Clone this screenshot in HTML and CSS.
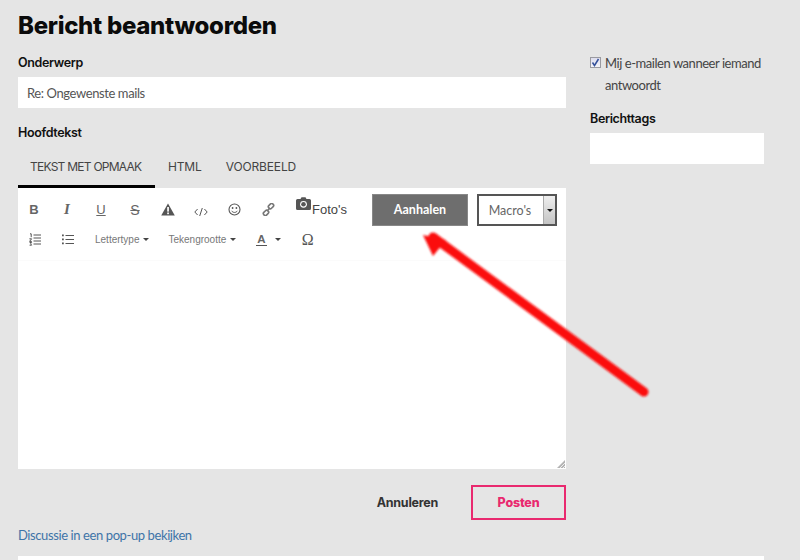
FILE: index.html
```html
<!DOCTYPE html>
<html lang="nl">
<head>
<meta charset="utf-8">
<title>Bericht beantwoorden</title>
<link rel="stylesheet" href="styles.css">
</head>
<body>
<div class="page">
  <main class="main">
    <h1 class="title">Bericht beantwoorden</h1>
    <label class="label first">Onderwerp</label>
    <div class="input subject">Re: Ongewenste mails</div>
    <label class="label second">Hoofdtekst</label>
    <div class="tabs">
      <span class="tab active">TEKST MET OPMAAK</span>
      <span class="tab">HTML</span>
      <span class="tab">VOORBEELD</span>
    </div>
    <section class="editor">
      <div class="toolbar">
        <div class="tool-rows">
          <div class="row row1">
            <span class="ic ic-b">B</span>
            <span class="ic ic-i">I</span>
            <span class="ic ic-u">U</span>
            <span class="ic ic-s">S</span>
            <svg class="svg warn" width="14" height="13" viewBox="0 0 14 13"><path fill="#555" d="M7 0.5 13.8 12.5H.2Z"/><rect x="6.2" y="4" width="1.7" height="4.6" fill="#fff"/><rect x="6.2" y="9.5" width="1.7" height="1.7" fill="#fff"/></svg>
            <svg class="svg code" width="14" height="10" viewBox="0 0 14 10"><path fill="none" stroke="#555" stroke-width="1" d="M3.6 2 .8 5l2.8 3M10.4 2 13.2 5l-2.8 3M8.3 1 5.7 9"/></svg>
            <svg class="svg smile" width="13" height="13" viewBox="0 0 13 13"><circle cx="6.5" cy="6.5" r="5.5" fill="none" stroke="#555" stroke-width="1.1"/><circle cx="4.6" cy="5" r=".9" fill="#555"/><circle cx="8.4" cy="5" r=".9" fill="#555"/><path d="M3.6 7.8c1.4 2.2 4.4 2.2 5.8 0" fill="none" stroke="#555" stroke-width="1"/></svg>
            <svg class="svg link" width="13" height="13" viewBox="0 0 13 13"><g fill="none" stroke="#777" stroke-width="1.6"><rect x="6.2" y="1.2" width="5.6" height="3.8" rx="1.6" transform="rotate(-45 9 3.1)"/><rect x="1.2" y="8" width="5.6" height="3.8" rx="1.6" transform="rotate(-45 4 9.9)"/><path d="M5 8 8 5"/></g></svg>
            <span class="photos">
              <svg class="camera" width="15" height="13" viewBox="0 0 15 13"><path fill="#555" d="M1.5 2H4.5L5.5.3H9.5L10.5 2H13.5Q15 2 15 3.5V11.5Q15 13 13.5 13H1.5Q0 13 0 11.5V3.5Q0 2 1.5 2Z"/><circle cx="7.5" cy="7.3" r="3.4" fill="#fff"/><circle cx="7.5" cy="7.3" r="2.3" fill="#555"/></svg>
              <span class="photos-text">Foto's</span>
            </span>
          </div>
          <div class="row row2">
            <svg class="svg ol" width="12" height="13" viewBox="0 0 12 13"><path fill="none" stroke="#555" stroke-width="1" d="M4.5 2h7.5M4.5 5h7.5M4.5 8h7.5M4.5 11h7.5M1 .8h1.2v3.4M.4 5.8h2.2L.6 8.4h2.2M.6 9.5h2l-1 1.3 1 1.4h-2"/></svg>
            <svg class="svg ul" width="12" height="11" viewBox="0 0 12 11"><path fill="none" stroke="#555" stroke-width="1" d="M3.5 1.5H12M3.5 5.5H12M3.5 9.5H12"/><path fill="#555" d="M0 .5h1.8v1.8H0zM0 4.5h1.8v1.8H0zM0 8.5h1.8v1.8H0z"/></svg>
            <span class="drop d-font">Lettertype<i class="caret"></i></span>
            <span class="drop d-size">Tekengrootte<i class="caret"></i></span>
            <span class="drop d-color"><span class="a-color">A</span><i class="caret"></i></span>
            <span class="omega">Ω</span>
          </div>
        </div>
        <button class="quote" type="button">Aanhalen</button>
        <div class="select">
          <span class="select-text">Macro's</span>
          <span class="select-arrow"><i class="caret dark"></i></span>
        </div>
      </div>
      <div class="body-area">
        <svg class="grip" width="8" height="8" viewBox="0 0 8 8"><path fill="#b4b4b4" d="M8 0V8H0Z"/><path stroke="#eee" stroke-width="1" d="M8 3 3 8M8 6 6 8"/></svg>
      </div>
    </section>
    <div class="actions">
      <span class="cancel">Annuleren</span>
      <button class="post" type="button">Posten</button>
    </div>
    <a class="popup" href="#">Discussie in een pop-up bekijken</a>
  </main>
  <aside class="side">
    <div class="check-row">
      <span class="check"><svg width="9" height="9" viewBox="0 0 9 9"><path fill="none" stroke="#33509a" stroke-width="1.5" d="M1.5 4.5 3.5 7.5 7.5 1"/></svg></span>
      <span class="check-label">Mij e-mailen wanneer iemand antwoordt</span>
    </div>
    <label class="label tags-label">Berichttags</label>
    <div class="input tags"></div>
  </aside>
</div>
<div class="next-card"></div>
<svg class="arrow" width="260" height="180" viewBox="0 0 260 180">
  <defs><filter id="soft" x="-10%" y="-10%" width="120%" height="120%"><feGaussianBlur stdDeviation="0.8"/></filter></defs>
  <g filter="url(#soft)">
    <path d="M33 17 244 172" stroke="#fb1010" stroke-width="9" stroke-linecap="round" fill="none"/>
    <path d="M23 15 46 20 33 36Z" fill="#fb1010"/>
  </g>
</svg>
</body>
</html>
```
FILE: styles.css
```css
* { box-sizing: border-box; }
html, body { margin: 0; height: 560px; overflow: hidden; }
body {
  position: relative;
  background: #e5e5e5;
  font-family: "Lato", "Liberation Sans", sans-serif;
  color: #4a4a4a;
}
.page {
  display: flex;
  gap: 24px;
  padding: 0 36px 0 18px;
  height: 556px;
  overflow: hidden;
}
.main { width: 548px; flex: none; }
.side { width: 174px; flex: none; padding-top: 55px; }
.title {
  margin: 11px 0 0;
  font: 800 24px/30px "Inter", sans-serif;
  letter-spacing: -.3px;
  color: #0b0b0b;
}
.label {
  display: block;
  font: 600 12.5px/16px "Inter", sans-serif;
  letter-spacing: -.35px;
  color: #111;
  padding-top: 1px;
  height: 16px;
}
.label.first { margin-top: 13px; }
.label.second { margin-top: 16px; }
.input { background: #fff; height: 31px; }
.subject {
  margin-top: 7px;
  padding: 0 9px;
  font: 400 13px/33px "Lato", sans-serif;
  letter-spacing: -.4px;
  color: #555;
}
.tabs { display: flex; height: 44px; margin-top: 4px; }
.tab {
  font: 400 12px/46px "Inter", sans-serif;
  letter-spacing: -.15px;
  color: #444;
  padding: 0 12px;
  border-bottom: 3px solid transparent;
}
.tab.active { width: 137px; border-bottom-color: #000; padding-right: 0; letter-spacing: -.75px; margin-right: 1px; }
.editor { background: #fff; height: 281px; display: flex; flex-direction: column; }
.toolbar { display: flex; height: 73px; padding: 6px 0 0 0; border-bottom: 1px solid #fbfbfb; }
.tool-rows { width: 354px; flex: none; }
.row { display: flex; align-items: center; color: #555; }
.row1 { height: 31px; }
.row2 { height: 29px; margin-top: 0; }
.ic { width: 14px; text-align: center; font: 700 13px/1 "Liberation Sans", sans-serif; color: #666; }
.ic-b { margin-left: 9px; }
.ic-i { margin-left: 19px; font: italic 700 15px/1 "Liberation Serif", serif; }
.ic-u { margin-left: 20px; font-weight: 400; text-decoration: underline; }
.ic-s { margin-left: 20px; font-weight: 400; text-decoration: line-through; font-size: 14px; }
.warn { margin-left: 19px; margin-top: -1px; }
.code { margin-left: 19px; margin-top: 4px; }
.smile { margin-left: 20px; margin-top: -1px; }
.link { margin-left: 21px; }
.photos { display: flex; align-items: flex-start; margin-left: 21px; margin-top: -3px; }
.camera { margin-top: -2px; }
.photos-text { font: 400 13px/16px "Liberation Sans", sans-serif; color: #444; margin-left: 1px; margin-top: 3px; }
.ol { margin-left: 11px; }
.ul { margin-left: 21px; }
.drop { display: inline-flex; align-items: center; font: 400 10px/12px "Liberation Sans", sans-serif; color: #777; }
.d-font { margin-left: 21px; }
.d-size { margin-left: 19px; }
.d-color { margin-left: 20px; }
.caret {
  display: inline-block;
  width: 0; height: 0;
  margin-left: 4px;
  border: 3.5px solid transparent;
  border-top-color: #444;
  border-bottom: 0;
}
.caret.dark { border-top-color: #111; margin: 0; }
.a-color {
  font: 700 11.5px/12px "Liberation Sans", sans-serif;
  color: #666;
  border-bottom: 1.5px solid #555;
  padding: 0 1px;
  margin-right: 4px;
}
.omega { margin-left: 21px; font: 400 16px/1 "Liberation Serif", serif; color: #555; }
.quote {
  width: 96px;
  height: 32px;
  background: #6e6e6e;
  border: 1px solid #888;
  color: #fff;
  font: 700 12.5px/30px "Lato", sans-serif;
  padding: 0;
}
.select {
  display: flex;
  width: 80px;
  height: 32px;
  margin-left: 9px;
  border: 2px solid #555;
  background: #fff;
}
.select-text { flex: 1; text-align: center; font: 400 12.5px/29px "Lato", sans-serif; color: #666; padding-right: 2px; }
.select-arrow {
  width: 12px;
  display: flex;
  align-items: center;
  justify-content: center;
  background: linear-gradient(#eee, #c4c4c4);
  border-left: 1px solid #aaa;
}
.body-area { flex: 1; position: relative; }
.grip { position: absolute; right: 1px; bottom: 1px; }
.actions { display: flex; justify-content: flex-end; align-items: center; height: 35px; margin-top: 16px; }
.cancel { font: 700 12.5px/1 "Inter", sans-serif; letter-spacing: -.25px; color: #333; margin-right: 33px; padding-top: 2px; }
.post {
  width: 95px;
  height: 35px;
  background: transparent;
  border: 2px solid #e9296f;
  color: #e9296f;
  font: 800 12.5px/1 "Inter", sans-serif;
  letter-spacing: -.2px;
  padding: 2px 0 0;
}
.popup {
  display: block;
  margin-top: 7px;
  font: 400 13px/16px "Lato", sans-serif;
  letter-spacing: -.4px;
  color: #3e74a8;
  text-decoration: none;
}
.check-row { display: flex; align-items: flex-start; }
.check {
  flex: none;
  width: 11px; height: 11px;
  margin-top: 2px;
  background: linear-gradient(#dde, #f4f4f8);
  border: 1px solid #9a9aa0;
  display: flex; align-items: center; justify-content: center;
}
.check-label {
  margin-left: 4px;
  font: 400 13px/22px "Lato", sans-serif;
  letter-spacing: -.45px;
  color: #444;
  margin-top: -3px;
}
.tags-label { margin-top: 14px; }
.tags { margin-top: 7px; }
.next-card { height: 4px; margin: 0 36px 0 18px; background: #fff; }
.arrow { position: absolute; left: 400px; top: 220px; pointer-events: none; }
```
